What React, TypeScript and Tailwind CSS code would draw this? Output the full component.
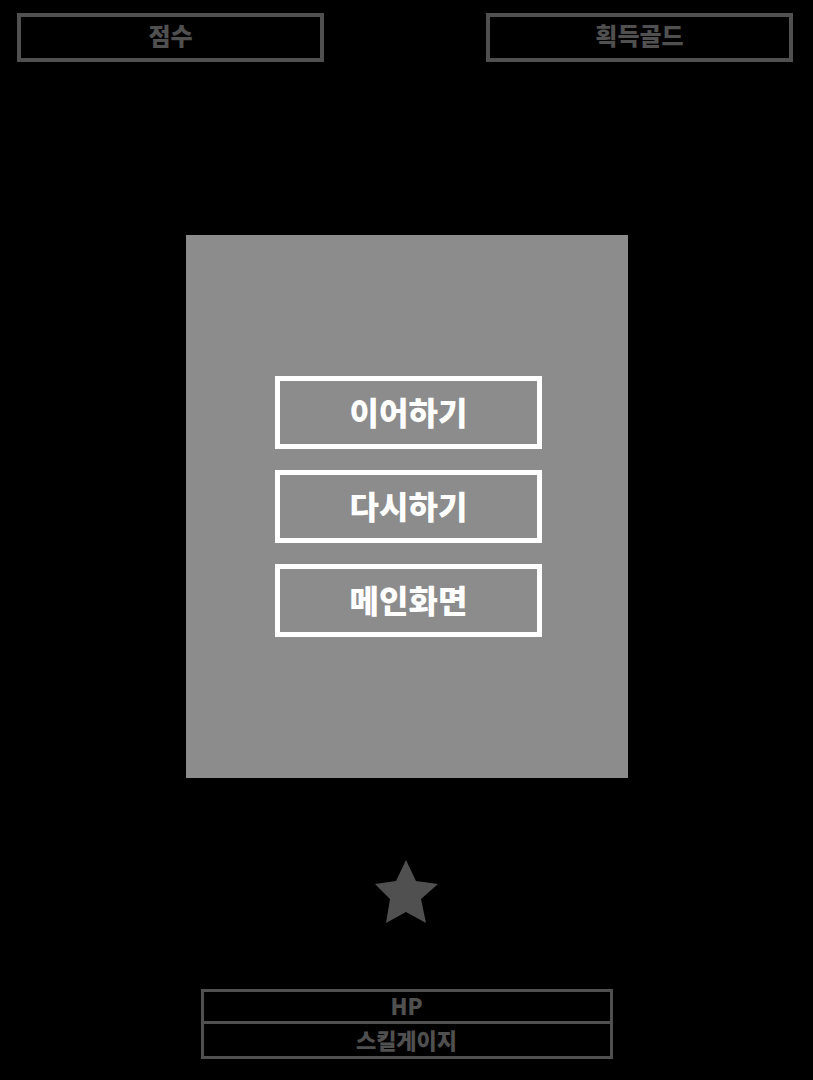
const font = "font-['Noto_Sans_CJK_KR','Noto_Sans',sans-serif]"

const TopBox = ({ label }: { label: string }) => (
  <div className="flex h-[49px] w-[307px] items-center justify-center border-4 border-[#505050] pb-[5px]">
    <span className="text-[24px] font-black leading-none text-[#505050]">{label}</span>
  </div>
)

const MenuButton = ({ label }: { label: string }) => (
  <button className="flex h-[73px] w-[267px] items-center justify-center border-[5px] border-white pb-[4px]">
    <span className="text-[32px] font-black leading-none text-white">{label}</span>
  </button>
)

export default function App() {
  return (
    <div className={`flex h-[1080px] w-full flex-col items-center bg-black ${font}`}>
      <div className="mt-[13px] flex w-full justify-between px-[17px] pr-[20px]">
        <TopBox label="점수" />
        <TopBox label="획득골드" />
      </div>

      <div className="mt-[173px] flex h-[543px] w-[442px] flex-col items-center justify-center gap-[21px] bg-[#8c8c8c] pl-[4px]">
        <MenuButton label="이어하기" />
        <MenuButton label="다시하기" />
        <MenuButton label="메인화면" />
      </div>

      <svg className="mt-[82px]" width="64" height="64" viewBox="0 0 64 64">
        <polygon
          points="31,0 41,21 63,24 46,39 51,63 31,52 11,63 15,39 0,24 21,21"
          fill="#505050"
        />
      </svg>

      <div className="mt-[65px] flex w-[412px] flex-col border-[3px] border-[#505050]">
        <div className="flex h-[32px] items-center justify-center border-b-[3px] border-[#505050] pb-[3px]">
          <span className="text-[22px] font-black leading-none text-[#505050]">HP</span>
        </div>
        <div className="flex h-[32px] items-center justify-center pb-[3px]">
          <span className="text-[22px] font-black leading-none text-[#505050]">스킬게이지</span>
        </div>
      </div>
    </div>
  )
}
